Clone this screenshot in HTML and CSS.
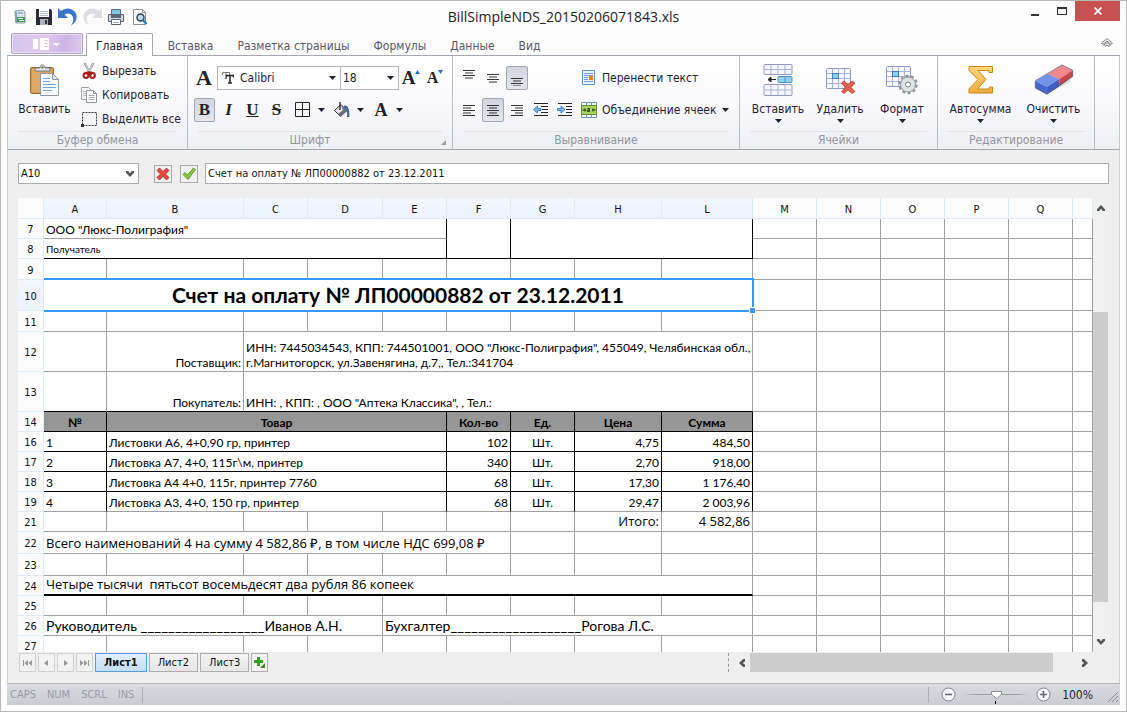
FILE: index.html
```html
<!DOCTYPE html>
<html lang="ru">
<head>
    <meta charset="UTF-8">
    <meta name="viewport" content="width=device-width, initial-scale=1.0">
    <title>BillSimpleNDS_20150206071843.xls</title>
    <link rel="stylesheet" href="styles.css">
</head>
<body>
    <!-- Shared symbols -->
    <svg class="defs" width="0" height="0" aria-hidden="true">
        <symbol id="caret" viewBox="0 0 7 4"><path d="M0 0h7L3.5 4z" fill="#1f2233"/></symbol>
        <symbol id="chevron" viewBox="0 0 8 6"><path d="M0 0h2.2L4 2.2 5.800 0H8v1.800L4 6 0 1.800z" fill="#555"/></symbol>
        <linearGradient id="gold" x1="0" y1="0" x2="0" y2="1"><stop offset="0" stop-color="#fbd77c"/><stop offset="1" stop-color="#f0ad3c"/></linearGradient>
    </svg>

    <header class="titlebar">
        <div class="quick-access">
            <button class="qa-btn" aria-label="Приложение"><svg width="16" height="16" viewBox="0 0 16 16"><path d="M3 2l8-1 2 2v11H4z" fill="#d9e4ea" stroke="#8fa5b3"/><path d="M3 2l2 1v11H4L3 13z" fill="#7fa6bf"/><rect x="5" y="8" width="8" height="5" fill="#3d9155"/><path d="M6 9h5v1H6zM7 11h5v1H7z" fill="#e9f6ec"/><path d="M6 4h5" stroke="#5b8fb8"/></svg></button>
            <button class="qa-btn" aria-label="Сохранить"><svg width="16" height="16" viewBox="0 0 16 16"><path d="M0 0h14.500L16 1.500V16H0z" fill="#2d2a3a"/><path d="M3 0h10v8H3z" fill="#fff"/><path d="M4 2.500h8M4 4.500h8M4 6.500h8" stroke="#b5b8c6"/><path d="M4 10h8v6H4z" fill="#aeb2bd"/><path d="M9 11h2v4H9z" fill="#2d2a3a"/></svg></button>
            <button class="qa-btn" aria-label="Отменить"><svg width="20" height="18" viewBox="0 0 20 18"><path d="M0 0l3 3C7-.5 13-.5 16.500 3.500c4 4.500 2.500 10.500-3.500 14C16 13 16 9.500 13.500 7 11.500 5 8.500 5 6.500 6.500L10 10H0z" fill="#3b74c9"/></svg></button>
            <button class="qa-btn" aria-label="Вернуть"><svg width="20" height="18" viewBox="0 0 20 18"><path d="M20 0l-3 3C13-.5 7-.5 3.500 3.500-.5 8 1 14 7 17.500 4 13 4 9.500 6.500 7c2-2 5-2 7-.5L10 10h10z" fill="#dcdde0"/></svg></button>
            <button class="qa-btn" aria-label="Печать"><svg width="16" height="16" viewBox="0 0 16 16"><path d="M3.500.5h9v6h-9z" fill="#7ec9e8" stroke="#57708a"/><path d="M.5 5.500h15v7H.5z" fill="#d5d8de" stroke="#5c6372"/><path d="M3 6h10v3H3z" fill="#5f6675"/><path d="M3.500 10.500h9v5h-9z" fill="#fff" stroke="#5c6372"/><path d="M5 13.500h6" stroke="#9ca3b0"/></svg></button>
            <button class="qa-btn" aria-label="Просмотр"><svg width="16" height="16" viewBox="0 0 16 16"><path d="M1.500.5h9l3 3v12h-12z" fill="#fbfcfd" stroke="#8a8f99"/><path d="M10.500.5v3h3" fill="none" stroke="#8a8f99"/><circle cx="8.500" cy="8.500" r="3.500" fill="#b9def0" stroke="#333b4d" stroke-width="1.500"/><path d="M11 11l3.500 4" stroke="#3f77c6" stroke-width="2.500"/></svg></button>
        </div>
        <h1 class="title">BillSimpleNDS_20150206071843.xls</h1>
        <div class="window-buttons">
            <button class="win-btn" aria-label="Свернуть"><svg width="12" height="12" viewBox="0 0 12 12"><path d="M2 9h8v2H2z" fill="#333"/></svg></button>
            <button class="win-btn" aria-label="Развернуть"><svg width="12" height="12" viewBox="0 0 12 12"><path d="M1 2h10v8H1z M2 4v5h8V4z" fill="#333" fill-rule="evenodd"/></svg></button>
            <button class="win-btn close" aria-label="Закрыть"><svg width="8" height="8" viewBox="0 0 8 8"><path d="M.5.5l7 7M7.500.5l-7 7" stroke="#fff" stroke-width="1.800"/></svg></button>
        </div>
    </header>

    <nav class="tabs">
        <button class="app-btn" aria-label="Меню"><svg width="28" height="12" viewBox="0 0 28 12"><path d="M0 1h5v10H0zM7 0h9v12H7z" fill="#fff"/><path d="M11.500 2.500h3M11.500 5.500h3M11.500 8.500h3" stroke="#d9bfe8"/><path d="M20 5h7l-3.500 3.500z" fill="#fff"/></svg></button>
        <a href="#" class="tab active">Главная</a>
        <a href="#" class="tab">Вставка</a>
        <a href="#" class="tab">Разметка страницы</a>
        <a href="#" class="tab">Формулы</a>
        <a href="#" class="tab">Данные</a>
        <a href="#" class="tab">Вид</a>
        <button class="collapse-btn" aria-label="Свернуть ленту"><svg width="12" height="9" viewBox="0 0 12 9"><path d="M6 .6L.6 5l1.200 1.400L6 3.200l4.200 3.200L11.400 5z" fill="#fff" stroke="#777"/><path d="M6 4.600L2.800 7.200 4 8.500l2-1.600 2 1.600 1.200-1.300z" fill="#fff" stroke="#777"/></svg></button>
    </nav>

    <section class="ribbon">
        <div class="group clipboard">
            <div class="group-body">
                <button class="big-btn">
                    <svg width="32" height="32" viewBox="0 0 32 32"><rect x="1.500" y="3.500" width="23" height="26" rx="1.500" fill="#d39a4f" stroke="#a06c2c"/><rect x="3" y="5" width="20" height="23" fill="#dba964"/><path d="M6 7V4h5c0-4 5-4 5 0h5v3z" fill="#e5e7ea" stroke="#6e747c"/><circle cx="13.500" cy="3.500" r="1.200" fill="#6e747c"/><path d="M11.500 9.500h12l6 6v16h-18z" fill="#f8fafc" stroke="#8d97a5"/><path d="M23.500 9.500v6h6z" fill="#dfe6ee" stroke="#8d97a5"/><path d="M14 14.500h7M14 17.500h7M14 20.500h13M14 23.500h13M14 26.500h9" stroke="#6aa9e0"/></svg>
                    <span>Вставить</span>
                </button>
                <div class="small-list">
                    <button class="small-btn"><svg width="16" height="16" viewBox="0 0 16 16"><path d="M3.500 0L9 10M12.500 0L7 10" stroke="#8a8f98" stroke-width="2"/><path d="M3.800.5L8 8M12.200.5L8 8" stroke="#e8eaee" stroke-width=".8"/><ellipse cx="5" cy="12.500" rx="2.400" ry="2.400" fill="none" stroke="#a81d12" stroke-width="2"/><ellipse cx="11.500" cy="12.500" rx="2.400" ry="2.400" fill="none" stroke="#a81d12" stroke-width="2"/><path d="M5.500 8.500h5.500v3.500H5.500z" fill="#a81d12"/></svg><span>Вырезать</span></button>
                    <button class="small-btn"><svg width="16" height="16" viewBox="0 0 16 16"><path d="M.5.5h7l2 2v10h-9z" fill="#f4f5f8" stroke="#9aa0ab"/><path d="M2 4.500h4M2 6.500h3M2 8.500h3" stroke="#b7bdc8"/><path d="M5.500 3.500h7l3 3v9h-10z" fill="#fbfcfd" stroke="#9097a3"/><path d="M12.500 3.500v3h3" fill="none" stroke="#9097a3"/><path d="M7.500 8.500h6M7.500 10.500h6M7.500 12.500h6" stroke="#a9b1be"/></svg><span>Копировать</span></button>
                    <button class="small-btn"><svg width="16" height="16" viewBox="0 0 16 16"><path d="M1.500 1.500h14v13h-14z" fill="none" stroke="#333" stroke-dasharray="2 1"/><path d="M0 13h3v3H0z" fill="#333"/></svg><span>Выделить все</span></button>
                </div>
            </div>
            <div class="group-caption"><span>Буфер обмена</span></div>
        </div>

        <div class="group font">
            <div class="group-body rows">
                <div class="row">
                    <span class="font-mark">A</span>
                    <label class="combo font-name">
                        <svg width="12" height="12" viewBox="0 0 12 12"><path d="M.5 3V.5h7V3M4 .5v6M2.500 6.500H5" fill="none" stroke="#777"/><path d="M4.500 5.500v-2h7v2M8 3.500v7.500M6 11h4" fill="none" stroke="#222" stroke-width="1.500"/></svg>
                        <select aria-label="Шрифт"><option>Calibri</option></select>
                        <svg class="caret" width="7" height="4"><use href="#caret"/></svg>
                    </label>
                    <label class="combo font-size">
                        <select aria-label="Размер"><option>18</option></select>
                        <svg class="caret" width="7" height="4"><use href="#caret"/></svg>
                    </label>
                    <button class="grow-btn" aria-label="Увеличить шрифт"><span>A</span><svg width="5" height="4" viewBox="0 0 5 4"><path d="M0 4h5L2.500 0z" fill="#2d6cc4"/></svg></button>
                    <button class="grow-btn shrink" aria-label="Уменьшить шрифт"><span>A</span><svg width="5" height="4" viewBox="0 0 5 4"><path d="M0 0h5L2.500 4z" fill="#2d6cc4"/></svg></button>
                </div>
                <div class="row letters">
                    <button class="letter-btn pressed">B</button>
                    <button class="letter-btn italic">I</button>
                    <button class="letter-btn underline">U</button>
                    <button class="letter-btn strike">S</button>
                    <button class="split-btn first" aria-label="Границы"><svg width="16" height="16" viewBox="0 0 16 16"><path d="M.5.5h14v14H.5zM7.500.5v14M.5 7.500h14" fill="none" stroke="#222"/></svg><svg width="7" height="4"><use href="#caret"/></svg></button>
                    <button class="split-btn" aria-label="Заливка"><svg width="16" height="16" viewBox="0 0 16 16"><path d="M.5 8.500L7 2.500l6 6-6.500 6z" fill="#e3e5e9" stroke="#333"/><path d="M7 2.500l6 6-6.500 6L4 12l5-4z" fill="#6c7078"/><path d="M6 0v8" stroke="#333" stroke-width="1.500"/><path d="M10 3.500c3.500-.5 5.500 2 5.500 11.500h-2.500C13.500 10 12.500 7 10 5.500z" fill="#3c68ae"/></svg><svg width="7" height="4"><use href="#caret"/></svg></button>
                    <button class="split-btn" aria-label="Цвет шрифта"><span>A</span><svg width="7" height="4"><use href="#caret"/></svg></button>
                </div>
            </div>
            <div class="group-caption"><span>Шрифт</span><button class="launcher" aria-label="Параметры шрифта"><svg width="5" height="5" viewBox="0 0 5 5"><path d="M5 0v5H0z" fill="#9a9ca5"/></svg></button></div>
        </div>

        <div class="group align">
            <div class="group-body align-grid">
                <button class="icon-btn" aria-label="По верхнему краю"><svg width="12" height="16" viewBox="0 0 12 16"><path d="M0 .5h12M2 3h8M0 5.500h12M2 8h8" stroke="#333"/></svg></button>
                <button class="icon-btn" aria-label="По середине"><svg width="12" height="16" viewBox="0 0 12 16"><path d="M0 4.500h12M2 7h8M0 9.500h12M2 12h8" stroke="#333"/></svg></button>
                <button class="icon-btn pressed" aria-label="По нижнему краю"><svg width="12" height="16" viewBox="0 0 12 16"><path d="M0 8.500h12M2 11h8M0 13.500h12M2 16h8" stroke="#333"/></svg></button>
                <button class="small-btn wrap-btn"><svg width="16" height="16" viewBox="0 0 16 16"><path d="M1.500.5h12v14h-12z" fill="#eef4fc" stroke="#5e8fd0"/><path d="M3 3.500h9M3 5.500h9M3 7.500h4M3 9.500h4M3 11.500h9" stroke="#6f9ad6"/><path d="M8 6h4v4H8z" fill="#e0861a"/></svg><span>Перенести текст</span></button>
                <button class="icon-btn" aria-label="По левому краю"><svg width="12" height="11" viewBox="0 0 12 11"><path d="M0 .5h12M0 3h8M0 5.500h12M0 8h8M0 10.500h12" stroke="#333"/></svg></button>
                <button class="icon-btn pressed" aria-label="По центру"><svg width="12" height="11" viewBox="0 0 12 11"><path d="M0 .5h12M2 3h8M0 5.500h12M2 8h8M0 10.500h12" stroke="#333"/></svg></button>
                <button class="icon-btn" aria-label="По правому краю"><svg width="12" height="11" viewBox="0 0 12 11"><path d="M0 .5h12M4 3h8M0 5.500h12M4 8h8M0 10.500h12" stroke="#333"/></svg></button>
                <button class="icon-btn" aria-label="Уменьшить отступ"><svg width="16" height="14" viewBox="0 0 16 14"><path d="M1 .5h14M8 3.500h7M9 6.500h6M8 9.500h7M1 12.500h14" stroke="#222"/><path d="M4.500 3v2.500H8v2H4.500V10L.5 6.500z" fill="#7dbbf0" stroke="#2b6cb8" stroke-width=".8"/></svg></button>
                <button class="icon-btn" aria-label="Увеличить отступ"><svg width="16" height="14" viewBox="0 0 16 14"><path d="M1 .5h14M9 3.500h6M9 6.500h6M9 9.500h6M1 12.500h14" stroke="#222"/><path d="M4 3v2.500H.5v2H4V10l4-3.500z" fill="#7dbbf0" stroke="#2b6cb8" stroke-width=".8"/></svg></button>
                <button class="small-btn"><svg width="16" height="16" viewBox="0 0 16 16"><path d="M.5.5h15v15H.5z" fill="#fff" stroke="#6d96b8"/><path d="M.5 3.500h15v9H.5z" fill="#a6d45c" stroke="#5d8f2b"/><path d="M5.500 0v3M10.500 0v3M5.500 13v3M10.500 13v3" stroke="#6d96b8"/><path d="M1.500 8H5M4 6.500v3M14.500 8H11M12 6.500v3M6.500 6.500h2v3h-2V8h2" fill="none" stroke="#1f3a10"/></svg><span>Объединение ячеек</span><svg class="tail" width="7" height="4"><use href="#caret"/></svg></button>
            </div>
            <div class="group-caption"><span>Выравнивание</span></div>
        </div>

        <div class="group cells">
            <div class="group-body">
                <button class="big-btn">
                    <svg width="32" height="32" viewBox="0 0 32 32"><g fill="#f6f8fd" stroke="#8b97c0"><rect x="2" y=".5" width="28" height="10" rx="1"/><rect x="2" y="20.500" width="28" height="11" rx="1"/><path d="M9 .5v10M16 .5v10M23 .5v10M2 5.500h28M9 20.500v11M16 20.500v11M23 20.500v11M2 26h28" stroke="#a9b3d3"/></g><rect x="16" y="12.500" width="14" height="6" rx="1" fill="#8fd0ef" stroke="#4a93bf"/><path d="M23 12.500v6" stroke="#4a93bf"/><path d="M14 15.500H8M9 13l-3 2.500L9 18z" stroke="#222" fill="#222"/></svg>
                    <span>Вставить</span>
                    <svg width="7" height="4"><use href="#caret"/></svg>
                </button>
                <button class="big-btn">
                    <svg width="32" height="32" viewBox="0 0 32 32"><rect x="2.500" y="4.500" width="24" height="20" rx="1" fill="#f6f8fd" stroke="#8b97c0"/><path d="M8.500 4.500v20M14.500 4.500v20M20.500 4.500v20M2.500 9.500h24M2.500 14.500h24M2.500 19.500h24" stroke="#a9b3d3"/><rect x="8.500" y="9.500" width="6" height="5" fill="#8fd0ef" stroke="#3f7fb8"/><path d="M20 17l4 3.500 4-3.500 3 2-4 4.500 4 4-3 2-4-3.500-4 3.500-2.500-2 4-4-4-4.500z" fill="#e0604a" stroke="#b5321f" stroke-width=".7"/></svg>
                    <span>Удалить</span>
                    <svg width="7" height="4"><use href="#caret"/></svg>
                </button>
                <button class="big-btn">
                    <svg width="32" height="32" viewBox="0 0 32 32"><rect x=".5" y="2.500" width="24" height="20" rx="1" fill="#f6f8fd" stroke="#8b97c0"/><path d="M6.500 2.500v20M12.500 2.500v20M18.500 2.500v20M.5 7.500h24M.5 12.500h24M.5 17.500h24" stroke="#a9b3d3"/><rect x="6.500" y="7.500" width="6" height="5" fill="#8fd0ef" stroke="#3f7fb8"/><circle cx="22" cy="20.500" r="8.500" fill="none" stroke="#8f959e" stroke-width="2.500" stroke-dasharray="3 2.340"/><circle cx="22" cy="20.500" r="7.500" fill="#dfe2e6" stroke="#8f959e"/><circle cx="22" cy="20.500" r="2.500" fill="#fff" stroke="#7b818a"/></svg>
                    <span>Формат</span>
                    <svg width="7" height="4"><use href="#caret"/></svg>
                </button>
            </div>
            <div class="group-caption"><span>Ячейки</span></div>
        </div>

        <div class="group edit">
            <div class="group-body">
                <button class="big-btn">
                    <svg width="32" height="32" viewBox="0 0 32 32"><path d="M4 2.500h23.500v6H24l-.5-2H13l8 9-8.500 9.500H24l.5-2h3v6H4V25l9-9.500L4 6.500z" fill="url(#gold)" stroke="#c98618"/></svg>
                    <span>Автосумма</span>
                    <svg width="7" height="4"><use href="#caret"/></svg>
                </button>
                <button class="big-btn">
                    <svg width="44" height="36" viewBox="0 0 44 36"><path d="M3 28l10 6 28-14v-3z" fill="#000" opacity=".12"/><path d="M1 19l14-8 13 6-14 9z" fill="#7193ea"/><path d="M15 11L31 1l12 6-15 10z" fill="#f0888a"/><path d="M1 19l13 7v8L1 27z" fill="#4667c9"/><path d="M14 26l14-9v8l-14 9z" fill="#3f5fc4"/><path d="M28 17L43 7v7l-15 11z" fill="#c8454a"/><path d="M1 19L31 1l12 6v7L14 34 1 27z" fill="none" stroke="#47406e" stroke-width=".7"/></svg>
                    <span>Очистить</span>
                    <svg width="7" height="4"><use href="#caret"/></svg>
                </button>
            </div>
            <div class="group-caption"><span>Редактирование</span></div>
        </div>
    </section>

    <main class="workspace">
        <div class="formula-bar">
            <label class="name-box">
                <select aria-label="Имя ячейки"><option>A10</option></select>
                <svg width="8" height="6"><use href="#chevron"/></svg>
            </label>
            <button class="entry-btn cancel" aria-label="Отмена"><svg width="14" height="14" viewBox="0 0 14 14"><path d="M3.500 1L7 4.500 10.500 1 13 3.500 9.500 7l3.500 3.500-2.500 2.500L7 9.500 3.500 13 1 10.500 4.500 7 1 3.500z" fill="#e24b42" stroke="#a82420" stroke-width=".8"/></svg></button>
            <button class="entry-btn" aria-label="Ввод"><svg width="14" height="14" viewBox="0 0 14 14"><path d="M1 7.500l2-2 2.500 2.500L11.500 1l2 1.500L6 12.500z" fill="#8cc443" stroke="#4d8520" stroke-width=".8"/></svg></button>
            <input class="formula" type="text" aria-label="Строка формул" value="Счет на оплату № ЛП00000882 от 23.12.2011">
        </div>

        <div class="sheet-area">
            <div class="sheet">
                <table>
                    <colgroup>
                        <col class="c-head"><col class="c-a"><col class="c-b"><col class="c-std"><col class="c-d"><col class="c-std"><col class="c-std"><col class="c-std"><col class="c-h"><col class="c-l">
                        <col class="c-std"><col class="c-std"><col class="c-std"><col class="c-std"><col class="c-std"><col>
                    </colgroup>
                    <thead>
                        <tr>
                            <th></th>
                            <th class="sel">A</th><th class="sel">B</th><th class="sel">C</th><th class="sel">D</th><th class="sel">E</th><th class="sel">F</th><th class="sel">G</th><th class="sel">H</th><th class="sel">L</th>
                            <th>M</th><th>N</th><th>O</th><th>P</th><th>Q</th><th></th>
                        </tr>
                    </thead>
                    <tbody>
                        <tr>
                            <th>7</th>
                            <td colspan="5" class="br">ООО "Люкс-Полиграфия"</td>
                            <td rowspan="2" class="br bb"></td><td colspan="3" rowspan="2" class="br bb"></td>
                            <td></td><td></td><td></td><td></td><td></td><td></td>
                        </tr>
                        <tr>
                            <th>8</th>
                            <td colspan="5" class="tiny br bb">Получатель</td>
                            <td></td><td></td><td></td><td></td><td></td><td></td>
                        </tr>
                        <tr class="h21">
                            <th>9</th>
                            <td></td><td></td><td></td><td></td><td></td><td></td><td></td><td></td><td></td>
                            <td></td><td></td><td></td><td></td><td></td><td></td>
                        </tr>
                        <tr class="h31">
                            <th class="sel">10</th>
                            <td colspan="9" class="heading selected">Счет на оплату № ЛП00000882 от 23.12.2011</td>
                            <td></td><td></td><td></td><td></td><td></td><td></td>
                        </tr>
                        <tr class="h21">
                            <th>11</th>
                            <td></td><td></td><td></td><td></td><td></td><td></td><td></td><td></td><td></td>
                            <td></td><td></td><td></td><td></td><td></td><td></td>
                        </tr>
                        <tr class="h40">
                            <th>12</th>
                            <td></td><td class="right">Поставщик:</td>
                            <td colspan="7">ИНН: 7445034543, КПП: 744501001, ООО "Люкс-Полиграфия", 455049, Челябинская обл.,<br>г.Магнитогорск, ул.Завенягина, д.7,, Тел.:341704</td>
                            <td></td><td></td><td></td><td></td><td></td><td></td>
                        </tr>
                        <tr class="h40">
                            <th>13</th>
                            <td class="bb"></td><td class="right bb">Покупатель:</td>
                            <td colspan="7" class="bb">ИНН: , КПП: , ООО "Аптека Классика", , Тел.:</td>
                            <td></td><td></td><td></td><td></td><td></td><td></td>
                        </tr>
                        <tr class="caption-row">
                            <th>14</th>
                            <td class="br bb">№</td><td colspan="4" class="br bb">Товар</td><td class="br bb">Кол-во</td><td class="br bb">Ед.</td><td class="br bb">Цена</td><td class="br bb">Сумма</td>
                            <td></td><td></td><td></td><td></td><td></td><td></td>
                        </tr>
                        <tr>
                            <th>16</th>
                            <td class="br bb">1</td><td colspan="4" class="br bb">Листовки А6, 4+0,90 гр, принтер</td><td class="right br bb">102</td><td class="center br bb">Шт.</td><td class="right br bb">4,75</td><td class="right br bb">484,50</td>
                            <td></td><td></td><td></td><td></td><td></td><td></td>
                        </tr>
                        <tr>
                            <th>17</th>
                            <td class="br bb">2</td><td colspan="4" class="br bb">Листовка А7, 4+0, 115г\м, принтер</td><td class="right br bb">340</td><td class="center br bb">Шт.</td><td class="right br bb">2,70</td><td class="right br bb">918,00</td>
                            <td></td><td></td><td></td><td></td><td></td><td></td>
                        </tr>
                        <tr>
                            <th>18</th>
                            <td class="br bb">3</td><td colspan="4" class="br bb">Листовка А4 4+0, 115г, принтер 7760</td><td class="right br bb">68</td><td class="center br bb">Шт.</td><td class="right br bb">17,30</td><td class="right br bb">1 176,40</td>
                            <td></td><td></td><td></td><td></td><td></td><td></td>
                        </tr>
                        <tr>
                            <th>19</th>
                            <td class="br">4</td><td colspan="4" class="br">Листовка А3, 4+0, 150 гр, принтер</td><td class="right br">68</td><td class="center br">Шт.</td><td class="right br">29,47</td><td class="right br">2 003,96</td>
                            <td></td><td></td><td></td><td></td><td></td><td></td>
                        </tr>
                        <tr>
                            <th>21</th>
                            <td></td><td></td><td></td><td></td><td></td><td></td><td></td><td class="large right">Итого:</td><td class="large right">4 582,86</td>
                            <td></td><td></td><td></td><td></td><td></td><td></td>
                        </tr>
                        <tr class="h22">
                            <th>22</th>
                            <td colspan="6" class="large">Всего наименований 4 на сумму 4 582,86 ₽, в том числе НДС 699,08 ₽</td><td></td><td></td><td></td>
                            <td></td><td></td><td></td><td></td><td></td><td></td>
                        </tr>
                        <tr class="h22">
                            <th>23</th>
                            <td></td><td></td><td></td><td></td><td></td><td></td><td></td><td></td><td></td>
                            <td></td><td></td><td></td><td></td><td></td><td></td>
                        </tr>
                        <tr>
                            <th>24</th>
                            <td colspan="9" class="large thick">Четыре тысячи&nbsp; пятьсот восемьдесят два рубля 86 копеек</td>
                            <td></td><td></td><td></td><td></td><td></td><td></td>
                        </tr>
                        <tr>
                            <th>25</th>
                            <td></td><td></td><td></td><td></td><td></td><td></td><td></td><td></td><td></td>
                            <td></td><td></td><td></td><td></td><td></td><td></td>
                        </tr>
                        <tr>
                            <th>26</th>
                            <td colspan="4" class="sign">Руководитель <span>__________________</span>Иванов А.Н.</td><td colspan="5" class="sign">Бухгалтер<span>___________________</span>Рогова Л.С.</td>
                            <td></td><td></td><td></td><td></td><td></td><td></td>
                        </tr>
                        <tr>
                            <th>27</th>
                            <td></td><td></td><td></td><td></td><td></td><td></td><td></td><td></td><td></td>
                            <td></td><td></td><td></td><td></td><td></td><td></td>
                        </tr>
                    </tbody>
                </table>
            </div>
            <div class="vscroll">
                <button class="arrow up" aria-label="Вверх"><svg width="8" height="6"><use href="#chevron"/></svg></button>
                <div class="vtrack"><div class="vthumb"></div></div>
                <button class="arrow" aria-label="Вниз"><svg width="8" height="6"><use href="#chevron"/></svg></button>
            </div>
        </div>

        <div class="sheet-bar">
            <button class="nav-btn" aria-label="Первый лист"><svg width="9" height="6" viewBox="0 0 9 6"><path d="M0 0h1v6H0zM5 0v6L1.500 3zM9 0v6L5.500 3z" fill="#999"/></svg></button>
            <button class="nav-btn" aria-label="Предыдущий лист"><svg width="9" height="6" viewBox="0 0 9 6"><path d="M6 0v6L2 3z" fill="#999"/></svg></button>
            <button class="nav-btn" aria-label="Следующий лист"><svg width="9" height="6" viewBox="0 0 9 6"><path d="M3 0v6l4-3z" fill="#999"/></svg></button>
            <button class="nav-btn" aria-label="Последний лист"><svg width="9" height="6" viewBox="0 0 9 6"><path d="M8 0h1v6H8zM0 0v6l3.500-3zM4 0v6l3.500-3z" fill="#999"/></svg></button>
            <button class="sheet-tab active">Лист1</button>
            <button class="sheet-tab">Лист2</button>
            <button class="sheet-tab">Лист3</button>
            <button class="nav-btn add" aria-label="Добавить лист"><svg width="11" height="11" viewBox="0 0 11 11"><path d="M3 0h3v3h3v3H6v3H3V6H0V3h3z" fill="#35a01e"/><path d="M11 6v5H6z" fill="#2a8a15"/></svg></button>
            <div class="hscroll">
                <button class="arrow left" aria-label="Влево"><svg width="8" height="6"><use href="#chevron"/></svg></button>
                <div class="htrack"><div class="hthumb"></div></div>
                <button class="arrow right-arrow" aria-label="Вправо"><svg width="8" height="6"><use href="#chevron"/></svg></button>
            </div>
        </div>
    </main>

    <footer class="statusbar">
        <span class="key caps">CAPS</span><span class="key">NUM</span><span class="key">SCRL</span><span class="key">INS</span>
        <div class="zoom">
            <button class="zoom-btn" aria-label="Уменьшить"><svg width="15" height="15" viewBox="0 0 15 15"><circle cx="7.500" cy="7.500" r="6.500" fill="#f6f7f9" stroke="#85888f"/><path d="M4 7.500h7" stroke="#666a73" stroke-width="1.600"/></svg></button>
            <div class="slider"><input type="range" min="0" max="100" value="50" aria-label="Масштаб"></div>
            <button class="zoom-btn" aria-label="Увеличить"><svg width="15" height="15" viewBox="0 0 15 15"><circle cx="7.500" cy="7.500" r="6.500" fill="#f6f7f9" stroke="#85888f"/><path d="M4 7.500h7M7.500 4v7" stroke="#666a73" stroke-width="1.600"/></svg></button>
            <span class="percent">100%</span>
            <svg class="grip" width="12" height="12" viewBox="0 0 12 12"><path d="M1 11L11 1M5 11l6-6M9 11l2-2" stroke="#8b8e96"/></svg>
        </div>
    </footer>
</body>
</html>
```

FILE: styles.css
```css
* { margin: 0; padding: 0; box-sizing: border-box; }
body { display: flex; flex-direction: column; height: 100vh; overflow: hidden; border: 1px solid #b8b8b8; padding: 0 6px 6px; background-color: #fdfdfd; font-family: "DejaVu Sans Condensed", "Noto Sans", sans-serif; font-size: 12px; line-height: 16px; color: #1f2233; }
button, select, input { font: inherit; color: inherit; border: none; background: none; outline: none; }
button { display: flex; align-items: center; justify-content: center; cursor: pointer; white-space: nowrap; }
select { appearance: none; }
svg { display: block; flex-shrink: 0; }
a { text-decoration: none; color: inherit; }
.defs { position: absolute; }

/* Title bar */
.titlebar { display: grid; grid-template-columns: 1fr auto 1fr; height: 32px; flex-shrink: 0; }
.quick-access { display: flex; align-items: center; padding-left: 1px; }
.qa-btn { width: 24px; height: 24px; }
.title { font-family: "Open Sans", "Noto Sans", sans-serif; font-size: 14px; font-weight: 400; line-height: 32px; color: #222; }
.window-buttons { display: flex; justify-content: flex-end; }
.win-btn { width: 27px; height: 20px; }
.close { width: 45px; background-color: #c75050; }

/* Ribbon tabs */
.tabs { display: flex; height: 23px; flex-shrink: 0; border-bottom: 1px solid #a5a7b3; }
.app-btn { width: 72px; height: 21px; margin: 0 3px 0 4px; border: 1px solid #a9a3bf; border-radius: 2px; background: linear-gradient(100deg, #d3c6ea, #e3c8ee 45%, #cdb5e6 75%, #dccbee); box-shadow: inset 0 0 0 1px #eadff5; }
.tab { padding: 1px 12px 0; line-height: 24px; color: #555866; white-space: nowrap; }
.tab.active { height: 23px; margin-right: 3px; padding: 0 9px; border: 1px solid #a5a7b3; border-bottom: none; border-radius: 2px 2px 0 0; background-color: #fff; color: #1f2233; line-height: 24px; }
.collapse-btn { margin-left: auto; width: 26px; height: 18px; }

/* Ribbon */
.ribbon { display: flex; height: 94px; flex-shrink: 0; border: 1px solid #c4c6cf; border-width: 0 1px 1px; border-bottom-color: #a5a7b3; background: linear-gradient(#fff, #fbfbfd 40%, #eff0f4); }
.group { display: flex; flex-direction: column; border-right: 1px solid #b9bcc8; }
.group.clipboard { width: 180px; }
.group.font { width: 265px; }
.group.align { width: 287px; }
.group.cells { width: 198px; }
.group.edit { width: 157px; }
.group-body { display: flex; flex: 1; justify-content: center; padding-top: 3px; }
.clipboard .group-body { justify-content: flex-start; }
.group-caption { position: relative; height: 18px; margin: 0 10px; border-top: 1px solid #e2e3e9; text-align: center; color: #92949f; line-height: 17px; }
.font .group-caption { padding-right: 20px; }
.launcher { position: absolute; right: -4px; bottom: 4px; }
.big-btn { flex-direction: column; justify-content: flex-start; width: 62px; height: 70px; padding-top: 5px; }
.clipboard .big-btn { width: 73px; }
.cells .group-body { padding-left: 3px; }
.edit .big-btn { width: 73px; }
.edit .group-body { padding-left: 2px; }
.big-btn svg:first-child { height: 32px; }
.big-btn span { margin: 5px 0 2px; }
.small-list { display: flex; flex-direction: column; }
.small-btn { height: 24px; justify-content: flex-start; gap: 5px; }
.small-btn .tail { margin-left: 1px; }

.rows { flex-direction: column; justify-content: flex-start; gap: 8px; padding: 10px 0 0 6px; }
.row { display: flex; align-items: center; height: 24px; }
.row.letters { gap: 3px; }
.font-mark, .grow-btn, .letter-btn, .split-btn span { font-family: "Liberation Serif", serif; font-weight: 700; color: #222; }
.font-mark { width: 23px; padding-right: 3px; text-align: center; font-size: 22px; line-height: 24px; }
.combo { display: flex; align-items: center; height: 24px; padding: 0 4px; border: 1px solid #b5b7c1; background-color: #fff; }
.combo select { flex: 1; min-width: 0; }
.font-name { width: 124px; gap: 6px; }
.font-size { width: 59px; margin-left: -1px; padding-left: 2px; }
.grow-btn { width: 24px; height: 24px; font-size: 19px; }
.grow-btn svg { align-self: flex-start; margin-top: 4px; }
.grow-btn.shrink { font-size: 16px; }
.letter-btn { width: 21px; height: 24px; font-size: 17px; }
.italic { font-style: italic; }
.underline { text-decoration: underline; }
.strike { text-decoration: line-through; }
.pressed { border: 1px solid #a3a7b5; border-radius: 2px; background: linear-gradient(#d3d6df, #e4e6ec); }
.split-btn { width: 36px; height: 24px; gap: 7px; }
.split-btn.first { margin-left: 2px; }
.split-btn span { width: 16px; font-size: 18px; }

.align-grid { display: grid; grid-template-columns: repeat(5, 24px) auto; grid-template-rows: 24px 24px; gap: 8px 0; align-content: start; justify-content: start; padding: 10px 0 0 4px; }
.icon-btn { width: 22px; height: 24px; margin: 0 1px; }
.align-grid .small-btn { padding-left: 4px; }
.wrap-btn { grid-column: 6; }

/* Formula bar */
.workspace { display: flex; flex-direction: column; flex: 1; min-height: 0; padding: 13px 10px 0; border: 1px solid #d0d0d0; border-width: 0 1px; background-color: #efefef; font-size: 11px; color: #111; }
.formula-bar { display: flex; align-items: center; height: 21px; margin-bottom: 14px; flex-shrink: 0; }
.name-box { display: flex; align-items: center; width: 121px; height: 21px; padding: 0 4px 0 2px; border: 1px solid #abadb3; background-color: #fff; }
.name-box select { flex: 1; }
.entry-btn { width: 18px; height: 18px; margin-right: 7px; border: 1px solid #ababab; background-color: #f0f0f0; }
.entry-btn.cancel { margin: 0 8px 0 15px; }
.formula { flex: 1; height: 21px; padding: 0 2px; border: 1px solid #abadb3; background-color: #fff; }

/* Sheet */
.sheet-area { display: flex; flex: 1; min-height: 0; }
.sheet { flex: 1; min-width: 0; overflow: hidden; background-color: #fff; }
table { width: 100%; table-layout: fixed; border-collapse: separate; border-spacing: 0; }
.c-head { width: 26px; }
.c-a { width: 63px; }
.c-b { width: 137px; }
.c-std { width: 64px; }
.c-d { width: 75px; }
.c-h { width: 87px; }
.c-l { width: 91px; }
tr { height: 20px; }
thead tr { height: 21px; }
.h21 { height: 21px; }
.h22 { height: 22px; }
.h31 { height: 31px; }
.h40 { height: 40px; }
th { padding-top: 3px; font-weight: 400; line-height: 14px; border-right: 1px solid #dfebf8; border-bottom: 1px solid #dfebf8; background-color: #fcfcfd; }
th.sel { background: linear-gradient(#f3f7fe, #ebf3fd); }
td { padding: 0 2px 1px; border-right: 1px solid #a0a0a0; border-bottom: 1px solid #a0a0a0; font-family: Lato, "Open Sans", sans-serif; font-size: 12px; line-height: 15px; vertical-align: bottom; white-space: nowrap; color: #000; }
.br { border-right-color: #000; }
.bb { border-bottom-color: #000; }
.thick { border-bottom: 2px solid #000; }
.right { text-align: right; }
.center { text-align: center; }
.tiny { font-size: 10px; }
.large { font-family: "Open Sans", sans-serif; font-size: 13px; line-height: 17px; }
.sign { font-size: 14px; line-height: 17px; }
.sign span { font-size: 15px; }
.heading { font-size: 21px; font-weight: 700; line-height: 28px; text-align: center; }
.caption-row .bb { background-color: #969696; font-weight: 700; text-align: center; }
.selected { position: relative; }
.selected::before { content: ""; position: absolute; inset: -2px -2px -2px 0; border: 2px solid #3399ff; border-left: none; }
.selected::after { content: ""; position: absolute; right: -3px; bottom: -3px; width: 5px; height: 5px; background-color: #3399ff; box-shadow: 0 0 0 1px #fff; }

/* Scroll bars */
.vscroll { display: flex; flex-direction: column; width: 16px; background-color: #f0f0f0; }
.arrow { width: 16px; height: 20px; }
.up svg { transform: rotate(180deg); }
.left svg { transform: rotate(90deg); }
.right-arrow svg { transform: rotate(-90deg); }
.vtrack { flex: 1; padding-right: 1px; display: grid; grid-template-rows: 94fr 291fr 30fr; }
.vthumb { grid-row: 2; background-color: #cdcdcd; }

.sheet-bar { display: flex; gap: 2px; padding: 1px 16px 11px 1px; flex-shrink: 0; }
.nav-btn { width: 17px; height: 19px; border: 1px solid #d2d2d2; background-color: #f3f3f3; }
.nav-btn.add { border-color: #adadad; }
.sheet-tab { height: 19px; padding: 0 8px; border: 1px solid #adadad; background: linear-gradient(#f4f4f4, #e6e6e6); }
.sheet-tab.active { border-color: #569de5; background: linear-gradient(#e2f0fd, #c4dffa); font-weight: 700; }
.hscroll { display: flex; flex: 0 1 365px; height: 19px; margin-left: auto; padding-left: 5px; border-left: 1px dashed #999; }
.hscroll .arrow { height: 19px; }
.htrack { flex: 1; display: grid; grid-template-columns: 302fr 24fr; }
.hthumb { background-color: #cdcdcd; }

/* Status bar */
.statusbar { display: flex; align-items: center; height: 22px; flex-shrink: 0; border-top: 1px solid #b4b6bf; background: linear-gradient(#d9dbe1, #cbccd2); font-size: 11px; color: #999ca5; }
.key { margin-right: 11px; }
.key.caps { margin-left: 3px; }
.key:nth-child(4) { padding-right: 8px; border-right: 1px solid #aaacb5; }
.zoom { display: flex; align-items: center; margin-left: auto; padding-left: 12px; border-left: 1px solid #aaacb5; color: #1f2233; font-size: 12px; }
.slider { position: relative; width: 66px; margin: 0 7px; }
.slider::after { content: ""; position: absolute; left: 32px; top: 14px; width: 1px; height: 3px; background-color: #000; }
.slider input { display: block; width: 66px; height: 16px; appearance: none; background: linear-gradient(90deg, transparent, #9b9ea6 20%, #9b9ea6 80%, transparent) center / 100% 1px no-repeat; }
.slider input::-webkit-slider-thumb { appearance: none; width: 11px; height: 8px; background: url("data:image/svg+xml,%3Csvg xmlns='http://www.w3.org/2000/svg' width='11' height='8'%3E%3Cpath d='M.5.5h10v3l-5 4-5-4z' fill='%23fff' stroke='%238b8e96'/%3E%3C/svg%3E") no-repeat; }
.percent { margin: 0 14px 0 11px; }
.grip { align-self: flex-end; margin-right: 1px; }
```
